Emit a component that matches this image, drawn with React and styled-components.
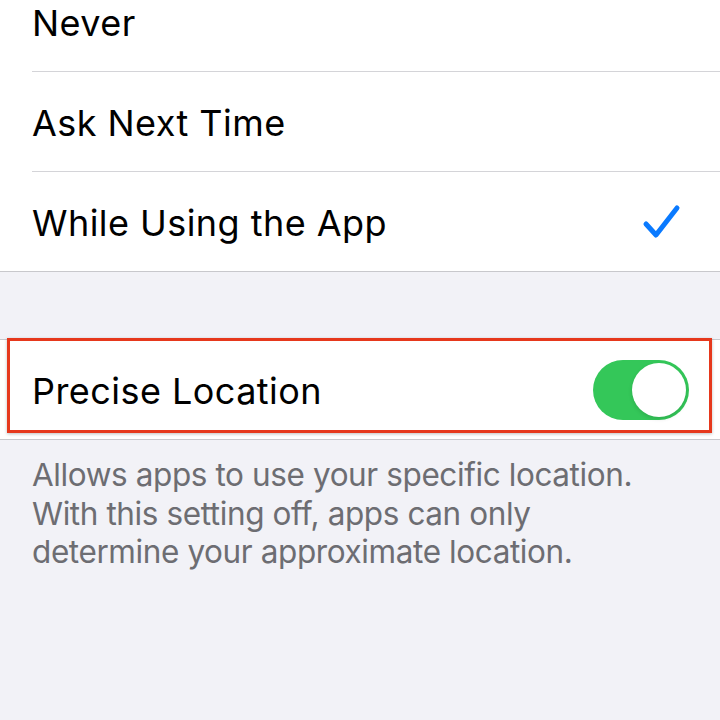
import React from "react";
import styled, { createGlobalStyle } from "styled-components";

const Global = createGlobalStyle`
  html, body { margin: 0; padding: 0; background: #f2f2f7; }
  body { width: 720px; height: 720px; overflow: hidden; font-family: Inter, "Liberation Sans", sans-serif; }
`;

const Page = styled.div`
  position: relative;
  width: 720px;
  height: 720px;
  background: #f2f2f7;
  overflow: hidden;
`;

const Stack = styled.div`
  display: flex;
  flex-direction: column;
  margin-top: -29px;
`;

const Group = styled.div`
  background: #ffffff;
  border-top: 1px solid #c8c8cc;
  border-bottom: 1px solid #c8c8cc;
  margin-top: ${(p) => p.$gap || 0}px;
  padding-left: 32px;
`;

const Row = styled.div`
  display: flex;
  align-items: center;
  justify-content: space-between;
  height: 99px;
  padding-right: ${(p) => p.$pr || 32}px;
  border-top: ${(p) => (p.$first ? "none" : "1px solid #d4d4d8")};
  font-size: 36px;
  color: #000;
  letter-spacing: 0.45px;
`;

const Label = styled.span`
  padding-top: 3px;
`;

const Toggle = styled.div`
  width: 96px;
  height: 60px;
  border-radius: 30px;
  background: #34c759;
  display: flex;
  align-items: center;
  justify-content: flex-end;
  padding: 3px;
  box-sizing: border-box;
  margin-right: -1px;
`;

const Knob = styled.div`
  width: 54px;
  height: 54px;
  border-radius: 50%;
  background: #fff;
  box-shadow: 0 2px 4px rgba(0,0,0,0.12);
`;

const Footer = styled.p`
  margin: 0;
  padding: 16px 60px 0 32px;
  font-size: 31.5px;
  line-height: 38.5px;
  color: #6d6d72;
  letter-spacing: -0.4px;
`;

const Highlight = styled.div`
  position: absolute;
  left: 7px;
  top: 338px;
  width: 705px;
  height: 95px;
  box-sizing: border-box;
  border: 3px solid #e6381c;
  box-shadow: 0 1px 3px rgba(0,0,0,0.25);
  pointer-events: none;
`;

function Check() {
  return (
    <svg width="40" height="38" viewBox="0 0 40 38">
      <path d="M5 21 L15 32 L36 5" fill="none" stroke="#0a7aff" strokeWidth="5" strokeLinecap="round" strokeLinejoin="round" />
    </svg>
  );
}

export default function App() {
  return (
    <Page>
      <Global />
      <Stack>
        <Group>
          <Row $first><Label>Never</Label></Row>
          <Row><Label>Ask Next Time</Label></Row>
          <Row $pr={39}>
            <Label>While Using the App</Label>
            <Check />
          </Row>
        </Group>
        <Group $gap={67}>
          <Row $first>
            <Label>Precise Location</Label>
            <Toggle><Knob /></Toggle>
          </Row>
        </Group>
        <Footer>
          Allows apps to use your specific location. With this setting off, apps can only determine your approximate location.
        </Footer>
      </Stack>
      <Highlight />
    </Page>
  );
}
